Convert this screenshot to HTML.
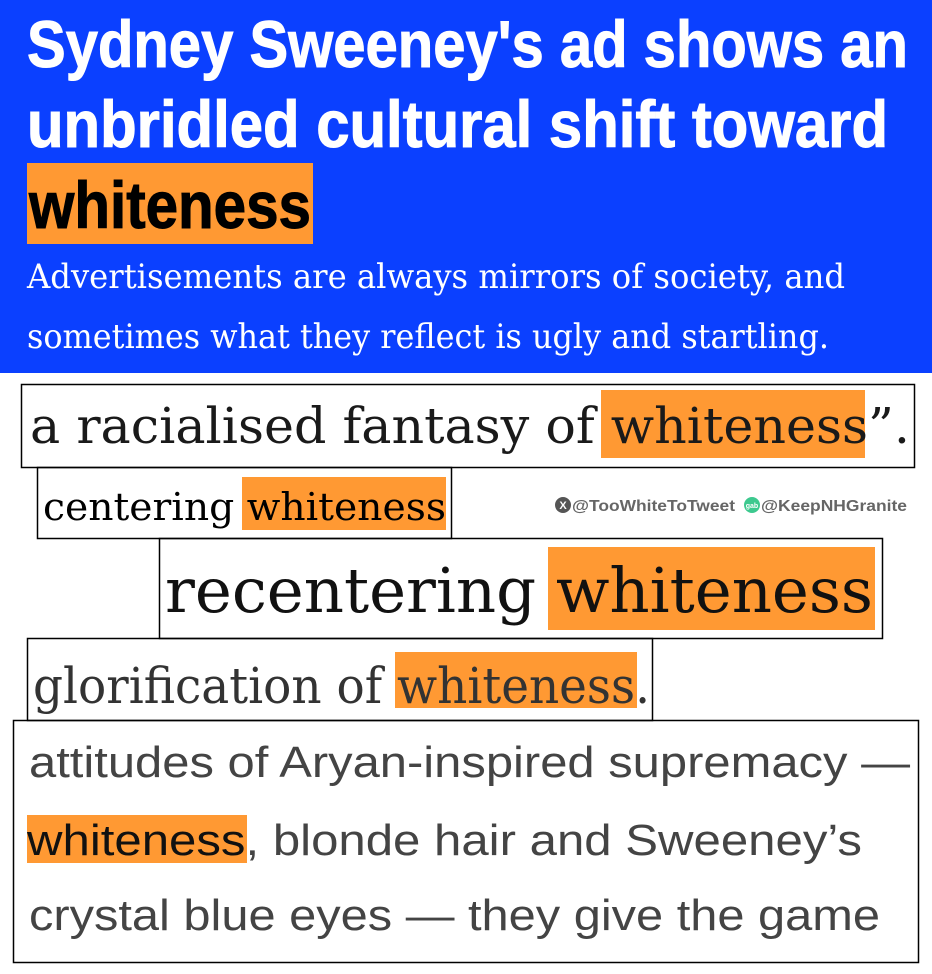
<!DOCTYPE html>
<html><head><meta charset="utf-8"><style>
html,body{margin:0;padding:0;background:#fff;}
svg{display:block}
</style></head><body>
<svg width="932" height="974" viewBox="0 0 932 974" xmlns="http://www.w3.org/2000/svg">
<rect x="0" y="0" width="932" height="373" fill="#0b40ff"/>
<g font-family="Liberation Sans, sans-serif" font-weight="bold" font-size="66" fill="#fff" stroke="#fff" stroke-width="1">
<text x="27" y="67" textLength="881" lengthAdjust="spacingAndGlyphs">Sydney Sweeney's ad shows an</text>
<text x="27" y="147" textLength="861" lengthAdjust="spacingAndGlyphs">unbridled cultural shift toward</text>
</g>
<rect x="27" y="163" width="286" height="81" fill="#ff9933"/>
<text x="29" y="228" font-family="Liberation Sans, sans-serif" font-weight="bold" font-size="66" stroke="#000" stroke-width="1" textLength="282" lengthAdjust="spacingAndGlyphs" fill="#000">whiteness</text>
<g font-family="DejaVu Serif, Liberation Serif, serif" font-size="34" fill="#fff">
<text x="27" y="288" textLength="818" lengthAdjust="spacingAndGlyphs">Advertisements are always mirrors of society, and</text>
<text x="27" y="348" textLength="802" lengthAdjust="spacingAndGlyphs">sometimes what they reflect is ugly and startling.</text>
</g>
<g fill="none" stroke="#000" stroke-width="1.5">
<rect x="21.5" y="384.5" width="893" height="83"/>
<rect x="37.5" y="467.5" width="414" height="71"/>
<rect x="159.5" y="538.5" width="723" height="100"/>
<rect x="27.5" y="638.5" width="625" height="82"/>
<rect x="13.5" y="720.5" width="905" height="242"/>
</g>
<g fill="#ff9933">
<rect x="601" y="390" width="264" height="68"/>
<rect x="242" y="477" width="204" height="53"/>
<rect x="548" y="547" width="327" height="83"/>
<rect x="395" y="652" width="242" height="56"/>
<rect x="27" y="815" width="220" height="48"/>
</g>
<g font-family="DejaVu Serif, Liberation Serif, serif">
<text x="30" y="443" font-size="50" fill="#1a1a1a" textLength="880" lengthAdjust="spacingAndGlyphs">a racialised fantasy of whiteness”.</text>
<text x="43" y="520" font-size="38" fill="#000" textLength="403" lengthAdjust="spacingAndGlyphs">centering whiteness</text>
<text x="165" y="612" font-size="62" fill="#111" textLength="708" lengthAdjust="spacingAndGlyphs">recentering whiteness</text>
<text x="33" y="703" font-size="50" fill="#333" textLength="617" lengthAdjust="spacingAndGlyphs">glorification of whiteness.</text>
</g>
<g font-family="Liberation Sans, sans-serif" font-size="44" fill="#444">
<text x="29" y="777" textLength="881" lengthAdjust="spacingAndGlyphs">attitudes of Aryan-inspired supremacy —</text>
<text x="27" y="855" textLength="835" lengthAdjust="spacingAndGlyphs"><tspan fill="#111">whiteness</tspan>, blonde hair and Sweeney’s</text>
<text x="29" y="930" textLength="851" lengthAdjust="spacingAndGlyphs">crystal blue eyes — they give the game</text>
</g>
<circle cx="563" cy="505" r="8" fill="#555"/>
<text x="563" y="509" font-family="Liberation Sans, sans-serif" font-size="11" font-weight="bold" fill="#fff" text-anchor="middle">X</text>
<circle cx="752" cy="505" r="8" fill="#3dc98f"/>
<text x="752" y="508" font-family="Liberation Sans, sans-serif" font-size="7" font-weight="bold" fill="#fff" text-anchor="middle">gab</text>
<g font-family="Liberation Sans, sans-serif" font-size="16" font-weight="bold" fill="#666">
<text x="572" y="511" textLength="163" lengthAdjust="spacingAndGlyphs">@TooWhiteToTweet</text>
<text x="761" y="511" textLength="146" lengthAdjust="spacingAndGlyphs">@KeepNHGranite</text>
</g>
</svg>
</body></html>
